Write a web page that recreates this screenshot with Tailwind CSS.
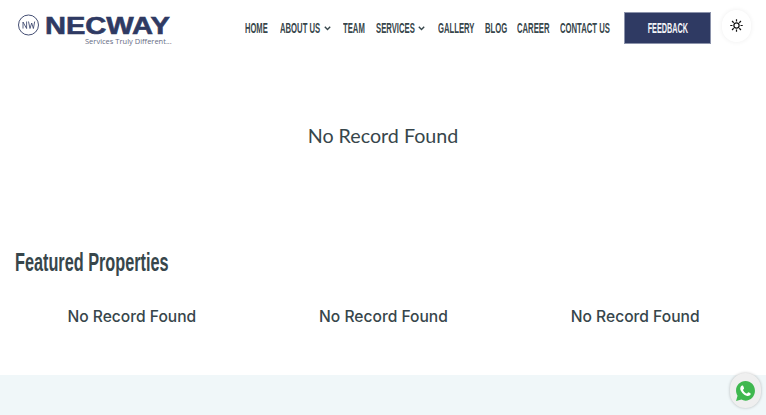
<!DOCTYPE html>
<html lang="en">
  <head>
    <meta charset="UTF-8" />
    <title>Necway</title>
    <script src="https://cdn.jsdelivr.net/npm/@tailwindcss/browser@4"></script>
    <meta name="viewport" content="width=device-width, initial-scale=1.0" />
  </head>
  <body class="bg-white h-[415px] overflow-hidden relative font-['Lato',sans-serif]">
    <header class="h-[56px] flex items-start">
      <!-- logo -->
      <div class="w-[245px] pl-[18px] pt-[13px] shrink-0">
        <div class="flex items-center gap-[6px] h-[24px]">
          <svg width="21" height="24" viewBox="0 0 21 24" fill="none" stroke="#2f3a63">
            <circle cx="10.500" cy="12" r="10" stroke-width="0.9" />
            <path d="M5 15.500V9l3.600 6.500V8.500M10.500 8.500l1.500 7 1.700-5.500 1.700 5.500 1.300-7" stroke-width="0.8" />
          </svg>
          <span class="inline-block origin-left scale-x-[1.21] font-['Liberation_Sans',sans-serif] font-bold text-[24px] leading-[19px] text-[#2f3a63] [-webkit-text-stroke:0.6px_#2f3a63]">NECWAY</span>
        </div>
        <p class="ml-[67px] text-[7.500px] leading-[9px] text-[#666c84] font-['Open_Sans',sans-serif] whitespace-nowrap">Services Truly Different...</p>
      </div>
      <!-- nav -->
      <nav class="flex items-center h-[56px] text-[#37464b] text-[14px] font-bold font-['Liberation_Sans',sans-serif] whitespace-nowrap">
        <a class="w-[35px]"><span class="inline-block origin-left scale-x-[0.54]">HOME</span></a>
        <a class="w-[63px] flex items-center"><span class="w-[44px] inline-block origin-left scale-x-[0.55]">ABOUT US</span>
          <svg width="7" height="5" viewBox="0 0 7 5" fill="none" stroke="#37464b" stroke-width="1.400"><path d="M.8.8 3.500 3.600 6.200.8" /></svg>
        </a>
        <a class="w-[33px]"><span class="inline-block origin-left scale-x-[0.55]">TEAM</span></a>
        <a class="w-[62px] flex items-center"><span class="w-[42px] inline-block origin-left scale-x-[0.55]">SERVICES</span>
          <svg width="7" height="5" viewBox="0 0 7 5" fill="none" stroke="#37464b" stroke-width="1.400"><path d="M.8.8 3.500 3.600 6.200.8" /></svg>
        </a>
        <a class="w-[47px]"><span class="inline-block origin-left scale-x-[0.55]">GALLERY</span></a>
        <a class="w-[32px]"><span class="inline-block origin-left scale-x-[0.55]">BLOG</span></a>
        <a class="w-[43px]"><span class="inline-block origin-left scale-x-[0.55]">CAREER</span></a>
        <a class="w-[64px]"><span class="inline-block origin-left scale-x-[0.55]">CONTACT US</span></a>
      </nav>
      <div class="mt-[12px] w-[87px] h-[32px] bg-[#2f3a63] border border-[#8c93ab] flex items-center justify-center text-[#f2f3f7] text-[14px] font-bold font-['Liberation_Sans',sans-serif]"><span class="inline-block scale-x-[0.52]">FEEDBACK</span></div>
      <div class="ml-[11px] mt-[10px] w-[29px] h-[32px] pb-[2px] rounded-full bg-white shadow-[0_0_5px_rgba(0,0,0,0.07)] flex items-center justify-center">
        <svg width="13" height="13" viewBox="0 0 14 14" fill="none" stroke="#111" stroke-width="1.300">
          <circle cx="7" cy="7" r="2.800" />
          <path d="M7 .3v2.400M7 11.300v2.400M.3 7h2.400M11.300 7h2.400M2.200 2.200l1.800 1.800M10 10l1.800 1.800M2.200 11.800 4 10M10 4l1.800-1.800" />
        </svg>
      </div>
    </header>

    <main>
      <p class="mt-[67px] text-center text-[19.700px] leading-[26px] text-[#37464b]">No Record Found</p>
      <h2 class="mt-[97px] pl-[15px] text-[25px] leading-[32px] font-bold text-[#37464b] font-['Liberation_Sans',sans-serif]"><span class="inline-block origin-left scale-x-[0.65]">Featured Properties</span></h2>
      <div class="mt-[27px] grid grid-cols-3 pl-[6px] pr-[5px] text-center text-[15.600px] leading-[24px] font-medium text-[#37464b] font-['Inter',sans-serif]">
        <p>No Record Found</p>
        <p>No Record Found</p>
        <p>No Record Found</p>
      </div>
    </main>

    <footer class="absolute left-0 right-0 bottom-0 h-[40px] bg-[#f0f7f9]"></footer>

    <!-- whatsapp floating button -->
    <div class="absolute left-[730px] top-[373px] w-[31px] h-[35px] rounded-full bg-[#efefef] shadow-[0_0_3px_rgba(0,0,0,0.25)] flex items-center justify-center">
      <svg width="21" height="24" viewBox="0 0 24 26">
        <path fill="#3fb84f" d="M12 1.500C5.900 1.500 1.200 6.400 1.200 12.400c0 2.200.6 4.200 1.700 5.900L1.200 24.500l6.100-1.700c1.400.8 3 1.200 4.700 1.200 6.100 0 10.800-5 10.800-11.300S18.100 1.500 12 1.500z" />
        <path fill="#fff" d="M8.200 6.800c-.3 0-.9.2-1.300.8-.5.7-.9 1.500-.9 2.600 0 1.700 1.100 3.500 2.400 5 1.600 1.800 3.500 3 5.600 3.500 1.500.3 3-.3 3.600-1.300.3-.5.4-1.300.3-1.600-.2-.3-2.300-1.400-2.700-1.400-.4 0-1 1.300-1.400 1.500-.5.2-1.800-.5-2.900-1.600-1-1-1.900-2.200-1.700-2.700.2-.4 1.100-1 1.200-1.500 0-.5-.9-2.800-1.200-3.100-.2-.2-.5-.2-.8-.2z" />
      </svg>
    </div>
  </body>
</html>
